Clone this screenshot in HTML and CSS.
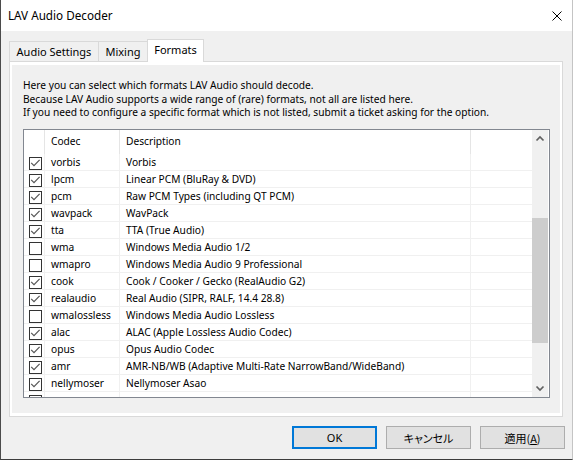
FILE: index.html
```html
<!DOCTYPE html>
<html>
<head>
<meta charset="utf-8">
<link rel="stylesheet" href="styles.css">
</head>
<body>
<div class="window">
  <div class="titlebar">
    <span class="title">LAV Audio Decoder</span>
    <svg class="close" viewBox="0 0 10 10"><path d="M0.5 0.5 L9.5 9.5 M9.5 0.5 L0.5 9.5" stroke="#000" stroke-width="1" fill="none"/></svg>
  </div>
  <div class="tabs">
    <div class="tab tab-audio">Audio Settings</div>
    <div class="tab tab-mixing">Mixing</div>
    <div class="tab tab-formats active">Formats</div>
  </div>
  <div class="panel">
    <div class="page">
      <p class="intro">Here you can select which formats LAV Audio should decode.<br>Because LAV Audio supports a wide range of (rare) formats, not all are listed here.<br>If you need to configure a specific format which is not listed, submit a ticket asking for the option.</p>
      <div class="listview">
        <div class="lv-main">
          <div class="lv-header">
            <div class="hcell"></div>
            <div class="hcell">Codec</div>
            <div class="hcell">Description</div>
            <div class="hcell last"></div>
          </div>
          <div class="row"><div class="cell chk"><svg class="cb" viewBox="0 0 13 13"><rect x="0.5" y="0.5" width="12" height="12" fill="#fff" stroke="#333"/><path d="M2.2 5.8 L5 8.6 L10.6 2.8" stroke="#555" stroke-width="1.2" fill="none"/></svg></div><div class="cell">vorbis</div><div class="cell">Vorbis</div><div class="cell last"></div></div>
          <div class="row"><div class="cell chk"><svg class="cb" viewBox="0 0 13 13"><rect x="0.5" y="0.5" width="12" height="12" fill="#fff" stroke="#333"/><path d="M2.2 5.8 L5 8.6 L10.6 2.8" stroke="#555" stroke-width="1.2" fill="none"/></svg></div><div class="cell">lpcm</div><div class="cell">Linear PCM (BluRay &amp; DVD)</div><div class="cell last"></div></div>
          <div class="row"><div class="cell chk"><svg class="cb" viewBox="0 0 13 13"><rect x="0.5" y="0.5" width="12" height="12" fill="#fff" stroke="#333"/><path d="M2.2 5.8 L5 8.6 L10.6 2.8" stroke="#555" stroke-width="1.2" fill="none"/></svg></div><div class="cell">pcm</div><div class="cell">Raw PCM Types (including QT PCM)</div><div class="cell last"></div></div>
          <div class="row"><div class="cell chk"><svg class="cb" viewBox="0 0 13 13"><rect x="0.5" y="0.5" width="12" height="12" fill="#fff" stroke="#333"/><path d="M2.2 5.8 L5 8.6 L10.6 2.8" stroke="#555" stroke-width="1.2" fill="none"/></svg></div><div class="cell">wavpack</div><div class="cell">WavPack</div><div class="cell last"></div></div>
          <div class="row"><div class="cell chk"><svg class="cb" viewBox="0 0 13 13"><rect x="0.5" y="0.5" width="12" height="12" fill="#fff" stroke="#333"/><path d="M2.2 5.8 L5 8.6 L10.6 2.8" stroke="#555" stroke-width="1.2" fill="none"/></svg></div><div class="cell">tta</div><div class="cell">TTA (True Audio)</div><div class="cell last"></div></div>
          <div class="row"><div class="cell chk"><svg class="cb" viewBox="0 0 13 13"><rect x="0.5" y="0.5" width="12" height="12" fill="#fff" stroke="#333"/></svg></div><div class="cell">wma</div><div class="cell">Windows Media Audio 1/2</div><div class="cell last"></div></div>
          <div class="row"><div class="cell chk"><svg class="cb" viewBox="0 0 13 13"><rect x="0.5" y="0.5" width="12" height="12" fill="#fff" stroke="#333"/></svg></div><div class="cell">wmapro</div><div class="cell">Windows Media Audio 9 Professional</div><div class="cell last"></div></div>
          <div class="row"><div class="cell chk"><svg class="cb" viewBox="0 0 13 13"><rect x="0.5" y="0.5" width="12" height="12" fill="#fff" stroke="#333"/><path d="M2.2 5.8 L5 8.6 L10.6 2.8" stroke="#555" stroke-width="1.2" fill="none"/></svg></div><div class="cell">cook</div><div class="cell">Cook / Cooker / Gecko (RealAudio G2)</div><div class="cell last"></div></div>
          <div class="row"><div class="cell chk"><svg class="cb" viewBox="0 0 13 13"><rect x="0.5" y="0.5" width="12" height="12" fill="#fff" stroke="#333"/><path d="M2.2 5.8 L5 8.6 L10.6 2.8" stroke="#555" stroke-width="1.2" fill="none"/></svg></div><div class="cell">realaudio</div><div class="cell">Real Audio (SIPR, RALF, 14.4 28.8)</div><div class="cell last"></div></div>
          <div class="row"><div class="cell chk"><svg class="cb" viewBox="0 0 13 13"><rect x="0.5" y="0.5" width="12" height="12" fill="#fff" stroke="#333"/></svg></div><div class="cell">wmalossless</div><div class="cell">Windows Media Audio Lossless</div><div class="cell last"></div></div>
          <div class="row"><div class="cell chk"><svg class="cb" viewBox="0 0 13 13"><rect x="0.5" y="0.5" width="12" height="12" fill="#fff" stroke="#333"/><path d="M2.2 5.8 L5 8.6 L10.6 2.8" stroke="#555" stroke-width="1.2" fill="none"/></svg></div><div class="cell">alac</div><div class="cell">ALAC (Apple Lossless Audio Codec)</div><div class="cell last"></div></div>
          <div class="row"><div class="cell chk"><svg class="cb" viewBox="0 0 13 13"><rect x="0.5" y="0.5" width="12" height="12" fill="#fff" stroke="#333"/><path d="M2.2 5.8 L5 8.6 L10.6 2.8" stroke="#555" stroke-width="1.2" fill="none"/></svg></div><div class="cell">opus</div><div class="cell">Opus Audio Codec</div><div class="cell last"></div></div>
          <div class="row"><div class="cell chk"><svg class="cb" viewBox="0 0 13 13"><rect x="0.5" y="0.5" width="12" height="12" fill="#fff" stroke="#333"/><path d="M2.2 5.8 L5 8.6 L10.6 2.8" stroke="#555" stroke-width="1.2" fill="none"/></svg></div><div class="cell">amr</div><div class="cell">AMR-NB/WB (Adaptive Multi-Rate NarrowBand/WideBand)</div><div class="cell last"></div></div>
          <div class="row"><div class="cell chk"><svg class="cb" viewBox="0 0 13 13"><rect x="0.5" y="0.5" width="12" height="12" fill="#fff" stroke="#333"/><path d="M2.2 5.8 L5 8.6 L10.6 2.8" stroke="#555" stroke-width="1.2" fill="none"/></svg></div><div class="cell">nellymoser</div><div class="cell">Nellymoser Asao</div><div class="cell last"></div></div>
          <div class="row"><div class="cell chk"><svg class="cb" viewBox="0 0 13 13"><rect x="0.5" y="0.5" width="12" height="12" fill="#fff" stroke="#333"/></svg></div><div class="cell"></div><div class="cell"></div><div class="cell last"></div></div>
        </div>
        <div class="scrollbar">
          <div class="sb-btn"><svg viewBox="0 0 16 17" width="16" height="17"><path d="M4.5 10.5 L8 7 L11.5 10.5" stroke="#606060" stroke-width="1.7" fill="none"/></svg></div>
          <div class="sb-track"><div class="sb-thumb"></div></div>
          <div class="sb-btn"><svg viewBox="0 0 16 17" width="16" height="17"><path d="M4.5 6.5 L8 10 L11.5 6.5" stroke="#606060" stroke-width="1.7" fill="none"/></svg></div>
        </div>
      </div>
    </div>
  </div>
  <div class="buttons">
    <div class="btn default">OK</div>
    <div class="btn jp">キャンセル</div>
    <div class="btn jp">適用(<u>A</u>)</div>
  </div>
</div>
</body>
</html>
```

FILE: styles.css
```css
body {
  margin: 0;
  background: #f0f0f0;
  font-family: "Noto Sans", "Noto Sans CJK JP", sans-serif;
  font-size: 10.2px;
  color: #000;
}

.window {
  width: 573px;
  height: 460px;
  box-sizing: border-box;
  border-left: 1px solid #4b4b4b;
  border-right: 1px solid #c4c4c4;
  border-bottom: 1px solid #3c3c3c;
  background: #f0f0f0;
  display: flex;
  flex-direction: column;
}

.titlebar {
  height: 31px;
  flex: none;
  background: #fff;
  display: flex;
  align-items: center;
  justify-content: space-between;
  padding: 0 10px 0 7px;
}

.title {
  line-height: 31px;
  font-size: 11.7px;
}

.close {
  width: 10px;
  height: 10px;
}

.tabs {
  display: flex;
  align-items: flex-end;
  height: 22px;
  margin: 8px 0 0 8px;
  flex: none;
  font-size: 11px;
}

.tab {
  height: 20px;
  box-sizing: border-box;
  border-top: 1px solid #d9d9d9;
  border-left: 1px solid #d9d9d9;
  text-align: center;
  line-height: 16px;
  padding-top: 2px;
  background: #f0f0f0;
}

.tab-audio { width: 89px; }
.tab-mixing { width: 49px; }

.tab.active {
  width: 57px;
  height: 23px;
  margin-bottom: -1px;
  border-right: 1px solid #d9d9d9;
  background: #fff;
  position: relative;
  z-index: 1;
  padding-top: 2px;
}

.panel {
  margin-left: 8px;
  width: 554px;
  height: 356px;
  flex: none;
  box-sizing: border-box;
  border: 1px solid #d9d9d9;
  background: #fff;
  padding: 3px 2px;
}

.page {
  height: 100%;
  box-sizing: border-box;
  background: #f0f0f0;
  padding: 14px 0 0 11px;
}

.intro {
  margin: 0 0 9.5px;
  line-height: 13.5px;
  white-space: nowrap;
}

.listview {
  width: 527px;
  height: 269px;
  box-sizing: border-box;
  border: 1px solid #828790;
  background: #fff;
  display: flex;
}

.lv-main {
  flex: 1;
  overflow: hidden;
}

.lv-header {
  display: grid;
  grid-template-columns: 21px 75px 351px 1fr;
  height: 24px;
}

.hcell {
  border-right: 1px solid #e5e5e5;
  padding-left: 6px;
  line-height: 23px;
  white-space: nowrap;
}

.row {
  display: grid;
  grid-template-columns: 21px 75px 351px 1fr;
  height: 17px;
  box-sizing: border-box;
  border-bottom: 1px solid #f0f0f0;
}

.cell {
  border-right: 1px solid #f0f0f0;
  padding-left: 6px;
  line-height: 17px;
  white-space: nowrap;
  overflow: hidden;
}

.hcell.last,
.cell.last {
  border-right: none;
}

.cell.chk {
  padding-left: 5px;
}

.cb {
  display: block;
  width: 13px;
  height: 13px;
  margin-top: 3px;
}

.scrollbar {
  width: 16px;
  margin-right: 1px;
  background: #f0f0f0;
  display: flex;
  flex-direction: column;
}

.sb-btn {
  height: 17px;
  flex: none;
}

.sb-btn svg {
  display: block;
}

.sb-track {
  flex: 1;
  padding-top: 71px;
}

.sb-thumb {
  height: 125px;
  background: #cdcdcd;
}

.buttons {
  display: flex;
  justify-content: flex-end;
  gap: 9px;
  padding-right: 7px;
  margin-top: 9px;
}

.btn {
  width: 85px;
  height: 23px;
  box-sizing: border-box;
  border: 1px solid #adadad;
  background: #e1e1e1;
  display: flex;
  align-items: center;
  justify-content: center;
  font-size: 11px;
}

.btn.jp {
  font-family: "Noto Sans CJK JP", sans-serif;
  font-size: 11px;
  font-feature-settings: "palt";
}

.btn.default {
  border: 2px solid #0078d7;
}
```
